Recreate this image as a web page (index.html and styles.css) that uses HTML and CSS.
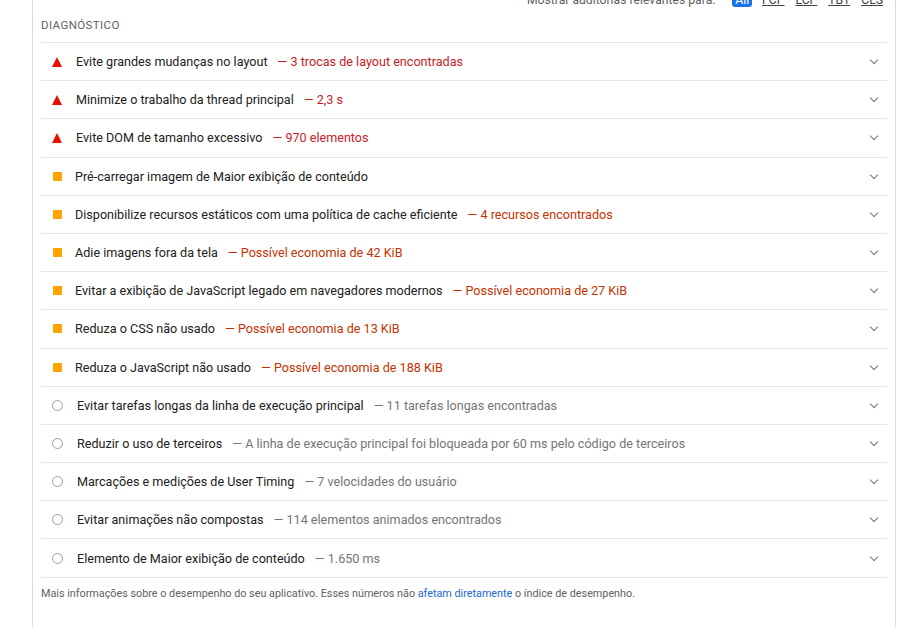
FILE: index.html
```html
<!DOCTYPE html>
<html lang="pt-BR">
<head>
    <meta charset="UTF-8">
    <meta name="viewport" content="width=device-width, initial-scale=1.0">
    <title>Diagnóstico</title>
    <link rel="stylesheet" href="styles.css">
</head>
<body>
    <div class="report">
        <div class="filter">
            <span class="filter-label">Mostrar auditorias relevantes para:</span>
            <span class="chip chip-active">All</span>
            <span class="chip">FCP</span>
            <span class="chip">LCP</span>
            <span class="chip">TBT</span>
            <span class="chip">CLS</span>
        </div>

        <div class="group-title">Diagnóstico</div>

        <ul class="audits">
            <li class="audit fail">
                <span class="icon"></span>
                <span class="title">Evite grandes mudanças no layout</span>
                <span class="value">— 3 trocas de layout encontradas</span>
                <span class="chevron"></span>
            </li>
            <li class="audit fail">
                <span class="icon"></span>
                <span class="title">Minimize o trabalho da thread principal</span>
                <span class="value">— 2,3 s</span>
                <span class="chevron"></span>
            </li>
            <li class="audit fail">
                <span class="icon"></span>
                <span class="title">Evite DOM de tamanho excessivo</span>
                <span class="value">— 970 elementos</span>
                <span class="chevron"></span>
            </li>
            <li class="audit average">
                <span class="icon"></span>
                <span class="title">Pré-carregar imagem de Maior exibição de conteúdo</span>
                <span class="chevron"></span>
            </li>
            <li class="audit average">
                <span class="icon"></span>
                <span class="title">Disponibilize recursos estáticos com uma política de cache eficiente</span>
                <span class="value">— 4 recursos encontrados</span>
                <span class="chevron"></span>
            </li>
            <li class="audit average">
                <span class="icon"></span>
                <span class="title">Adie imagens fora da tela</span>
                <span class="value">— Possível economia de 42 KiB</span>
                <span class="chevron"></span>
            </li>
            <li class="audit average">
                <span class="icon"></span>
                <span class="title">Evitar a exibição de JavaScript legado em navegadores modernos</span>
                <span class="value">— Possível economia de 27 KiB</span>
                <span class="chevron"></span>
            </li>
            <li class="audit average">
                <span class="icon"></span>
                <span class="title">Reduza o CSS não usado</span>
                <span class="value">— Possível economia de 13 KiB</span>
                <span class="chevron"></span>
            </li>
            <li class="audit average">
                <span class="icon"></span>
                <span class="title">Reduza o JavaScript não usado</span>
                <span class="value">— Possível economia de 188 KiB</span>
                <span class="chevron"></span>
            </li>
            <li class="audit info">
                <span class="icon"></span>
                <span class="title">Evitar tarefas longas da linha de execução principal</span>
                <span class="value">— 11 tarefas longas encontradas</span>
                <span class="chevron"></span>
            </li>
            <li class="audit info">
                <span class="icon"></span>
                <span class="title">Reduzir o uso de terceiros</span>
                <span class="value">— A linha de execução principal foi bloqueada por 60 ms pelo código de terceiros</span>
                <span class="chevron"></span>
            </li>
            <li class="audit info">
                <span class="icon"></span>
                <span class="title">Marcações e medições de User Timing</span>
                <span class="value">— 7 velocidades do usuário</span>
                <span class="chevron"></span>
            </li>
            <li class="audit info">
                <span class="icon"></span>
                <span class="title">Evitar animações não compostas</span>
                <span class="value">— 114 elementos animados encontrados</span>
                <span class="chevron"></span>
            </li>
            <li class="audit info">
                <span class="icon"></span>
                <span class="title">Elemento de Maior exibição de conteúdo</span>
                <span class="value">— 1.650 ms</span>
                <span class="chevron"></span>
            </li>
        </ul>

        <p class="note">Mais informações sobre o desempenho do seu aplicativo. Esses números não <a href="#">afetam diretamente</a> o índice de desempenho.</p>
    </div>
</body>
</html>
```

FILE: styles.css
```css
html, body {
    margin: 0;
    padding: 0;
    background: #fff;
    overflow: hidden;
}
body {
    font-family: Roboto, "Liberation Sans", Arial, sans-serif;
    font-size: 12.6px;
    color: #212121;
}
.report {
    margin-left: 32px;
    width: 846px;
    height: 635px;
    padding: 0 8px;
    border-left: 1px solid #dadada;
    border-right: 1px solid #dadada;
}
.filter {
    display: flex;
    justify-content: flex-end;
    align-items: center;
    gap: 9px;
    height: 16px;
    margin-top: -8px;
    padding-right: 3px;
    font-size: 12.2px;
    color: #616161;
}
.filter-label {
    margin-right: 8px;
}
.chip {
    padding: 0 1px;
    text-decoration: underline;
    color: #424242;
}
.chip-active {
    background: #1a73e8;
    color: #fff;
    text-decoration: none;
    border-radius: 3px;
    padding: 0 3px;
}
.group-title {
    margin-top: 10px;
    height: 24px;
    line-height: 14px;
    font-size: 11.5px;
    text-transform: uppercase;
    letter-spacing: 0.4px;
    color: #616161;
    border-bottom: 1px solid #e6e6e6;
}
.audits {
    list-style: none;
    margin: 0;
    padding: 0;
}
.audit {
    display: flex;
    align-items: center;
    height: 37.2px;
    border-bottom: 1px solid #e6e6e6;
    padding-left: 11px;
    padding-right: 8px;
}
.icon {
    flex: none;
    box-sizing: border-box;
}
.fail .icon {
    width: 0;
    height: 0;
    border-left: 5.5px solid transparent;
    border-right: 5.5px solid transparent;
    border-bottom: 10px solid #eb0f00;
    margin-right: 14px;
}
.average .icon {
    width: 9px;
    height: 9px;
    background: #ffa400;
    margin-left: 1px;
    margin-right: 13px;
}
.info .icon {
    width: 11px;
    height: 11px;
    border: 1.5px solid #9e9e9e;
    border-radius: 50%;
    margin-right: 14px;
}
.title {
    white-space: nowrap;
}
.value {
    margin-left: 10px;
    white-space: nowrap;
}
.fail .value {
    color: #c5221f;
}
.average .value {
    color: #c33300;
}
.info .value {
    color: #757575;
}
.chevron {
    margin-left: auto;
    width: 5px;
    height: 5px;
    border-right: 1.3px solid #757575;
    border-bottom: 1.3px solid #757575;
    transform: rotate(45deg);
    margin-top: -3px;
    margin-right: 2px;
}
.note {
    margin: 9px 0 0;
    font-size: 10.8px;
    color: #616161;
}
.note a {
    color: #1967d2;
    text-decoration: none;
}
```
